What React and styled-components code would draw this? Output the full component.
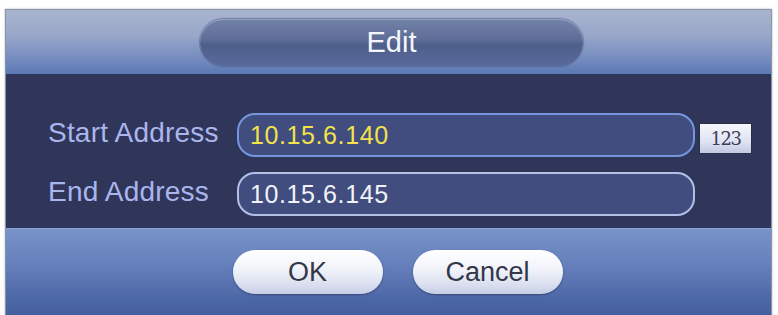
import React from "react";
import styled, { createGlobalStyle } from "styled-components";

const Global = createGlobalStyle`
  html, body {
    margin: 0;
    padding: 0;
    background: #ffffff;
    font-family: "Liberation Sans", Arial, sans-serif;
  }
`;

const Page = styled.div`
  width: 778px;
  height: 315px;
  overflow: hidden;
  padding: 9px 6px 0 5px;
  box-sizing: border-box;
`;

const Dialog = styled.div`
  display: flex;
  flex-direction: column;
  height: 320px;
  border: 1px solid #8c94a8;
  border-bottom: none;
  box-shadow: 0 0 2px rgba(90, 100, 120, 0.5);
`;

const Header = styled.div`
  height: 64px;
  display: flex;
  align-items: center;
  justify-content: center;
  padding-left: 6px;
  background: linear-gradient(
    to bottom,
    #a9b4cf 0%,
    #98a7c9 40%,
    #7189bf 80%,
    #5b79b4 100%
  );
`;

const TitlePill = styled.div`
  width: 383px;
  height: 47px;
  border-radius: 24px;
  display: flex;
  align-items: center;
  justify-content: center;
  color: #f4f6fb;
  font-size: 29px;
  background: linear-gradient(
    to bottom,
    #7282a8 0%,
    #5d6d97 45%,
    #4f5f8a 55%,
    #59699a 100%
  );
  box-shadow: inset 0 1px 1px rgba(200, 210, 235, 0.4),
    0 0 1px 1px rgba(80, 95, 135, 0.6);
`;

const Body = styled.div`
  background: #2f3659;
  padding: 39px 0 12px 42px;
  display: flex;
  flex-direction: column;
  gap: 15px;
`;

const Row = styled.div`
  display: flex;
  align-items: center;
  height: 44px;
`;

const Label = styled.div`
  width: 189px;
  color: #aab5ee;
  font-size: 28px;
  letter-spacing: 0.2px;
  position: relative;
  top: -2px;
`;

const Field = styled.div`
  width: 458px;
  height: 44px;
  box-sizing: border-box;
  border-radius: 18px;
  border: 2px solid ${(p) => (p.$active ? "#7596dc" : "#b3bfe6")};
  background: #404d7e;
  display: flex;
  align-items: center;
  padding-left: 11px;
  color: ${(p) => (p.$active ? "#f3e24a" : "#f2f3f8")};
  font-size: 25px;
  letter-spacing: 0.6px;
`;

const KeyButton = styled.div`
  margin-left: 4px;
  width: 53px;
  height: 31px;
  box-sizing: border-box;
  border: 1px solid #2a2f48;
  background: linear-gradient(to bottom, #f6f7fc 0%, #dfe3f3 60%, #c2c8e2 100%);
  display: flex;
  align-items: center;
  justify-content: center;
  color: #3a3f58;
  font-size: 18px;
  font-family: "DejaVu Serif", "Liberation Serif", serif;
  letter-spacing: -1.5px;
  position: relative;
  top: 3px;
`;

const Footer = styled.div`
  flex: 1;
  display: flex;
  justify-content: center;
  align-items: flex-start;
  gap: 30px;
  padding-top: 21px;
  padding-left: 18px;
  background: linear-gradient(
    to bottom,
    #7993c9 0%,
    #6580bb 35%,
    #4c67a5 70%,
    #3e5898 100%
  );
  border-top: 1px solid #8aa3d6;
`;

const Button = styled.div`
  width: 150px;
  height: 44px;
  border-radius: 22px;
  display: flex;
  align-items: center;
  justify-content: center;
  color: #33374a;
  font-size: 27px;
  background: linear-gradient(
    to bottom,
    #ffffff 0%,
    #f1f3fa 45%,
    #d9deef 80%,
    #c7cee6 100%
  );
  box-shadow: 0 1px 2px rgba(30, 40, 80, 0.5);
`;

export default function App() {
  return (
    <>
      <Global />
      <Page>
        <Dialog>
          <Header>
            <TitlePill>Edit</TitlePill>
          </Header>
          <Body>
            <Row>
              <Label>Start Address</Label>
              <Field $active>10.15.6.140</Field>
              <KeyButton>123</KeyButton>
            </Row>
            <Row>
              <Label>End Address</Label>
              <Field>10.15.6.145</Field>
            </Row>
          </Body>
          <Footer>
            <Button>OK</Button>
            <Button>Cancel</Button>
          </Footer>
        </Dialog>
      </Page>
    </>
  );
}
